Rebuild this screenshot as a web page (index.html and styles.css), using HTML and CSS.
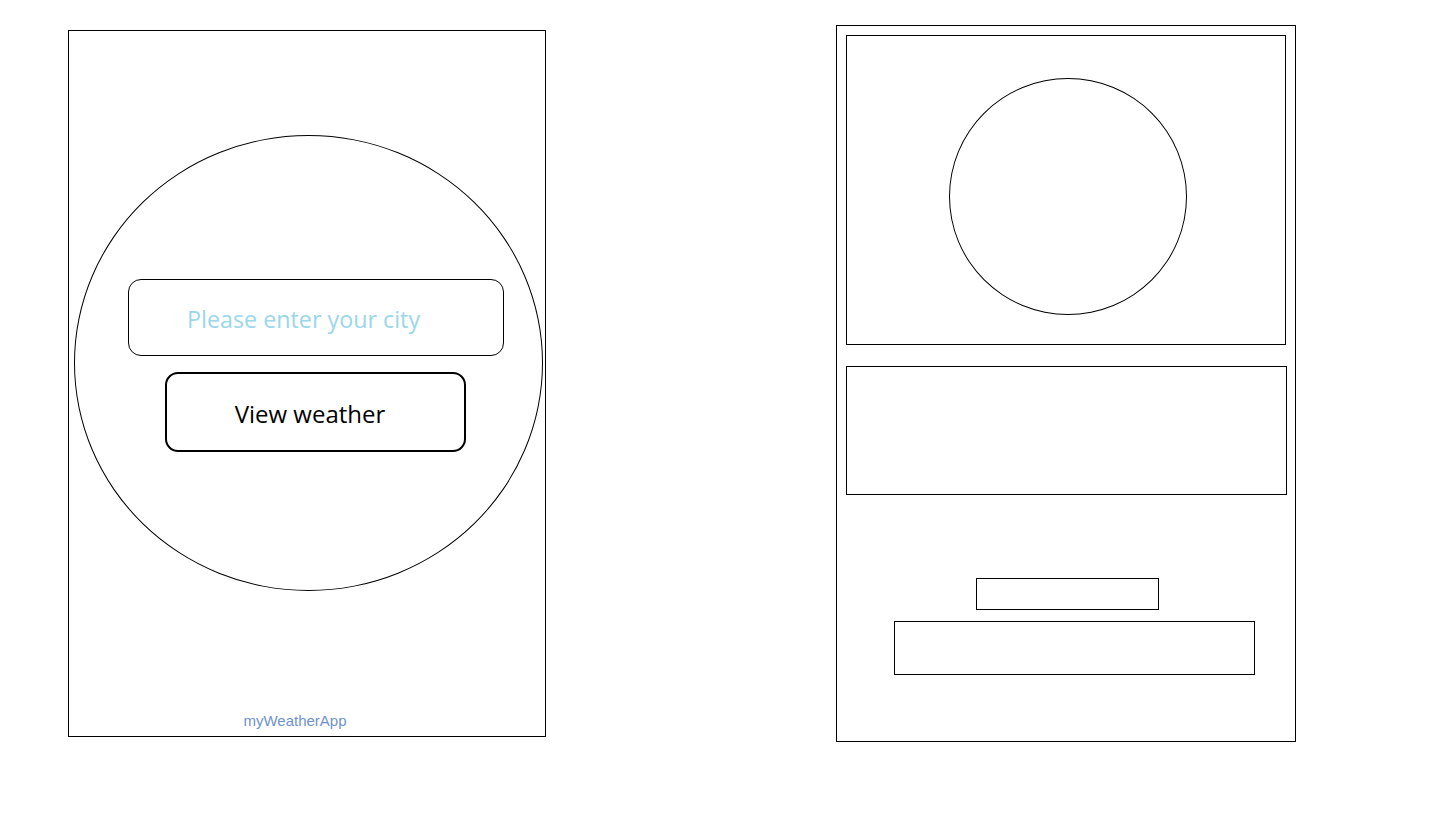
FILE: index.html
```html
<!DOCTYPE html>
<html lang="en">
<head>
<meta charset="utf-8">
<title>myWeatherApp</title>
<link rel="stylesheet" href="styles.css">
</head>
<body>
<div class="page">
  <section class="phone phone-search">
    <div class="search-circle">
      <input class="city-input" type="text" placeholder="Please enter your city">
      <button class="view-btn" type="button">View weather</button>
    </div>
    <footer class="app-name">myWeatherApp</footer>
  </section>

  <section class="phone phone-result">
    <div class="hero-box">
      <div class="icon-circle"></div>
    </div>
    <div class="info-box"></div>
    <div class="small-box"></div>
    <div class="wide-box"></div>
  </section>
</div>
</body>
</html>
```

FILE: styles.css
```css
* { box-sizing: border-box; }
html, body { margin: 0; padding: 0; background: #fff; }
body { font-family: "Open Sans", "Liberation Sans", sans-serif; color: #000; }

.page {
  display: flex;
  align-items: flex-start;
  width: 1442px;
  height: 816px;
}

.phone { border: 1px solid #000; display: flex; flex-direction: column; align-items: flex-start; }

.phone-search {
  margin-left: 68px;
  margin-top: 30px;
  width: 478px;
  height: 707px;
}

.search-circle {
  margin-top: 104px;
  margin-left: 5px;
  width: 469px;
  height: 456px;
  border: 1px solid #000;
  border-radius: 50%;
  display: flex;
  flex-direction: column;
  align-items: center;
  padding-top: 143px;
  padding-left: 15px;
}

.city-input {
  width: 376px;
  height: 77px;
  border: 1px solid #000;
  border-radius: 13px;
  padding: 2px 0 0 58px;
  font-family: "Open Sans", sans-serif;
  font-size: 23.3px;
  color: #000;
  background: #fff;
  outline: none;
}
.city-input::placeholder { color: #9ad7ea; opacity: 1; }

.view-btn {
  margin-top: 16px;
  margin-left: -2px;
  width: 301px;
  height: 80px;
  border: 2px solid #000;
  border-radius: 13px;
  background: #fff;
  font-family: "Open Sans", sans-serif;
  font-size: 24px;
  color: #000;
  padding: 2px 10px 0 0;
}

.app-name {
  margin-top: auto;
  align-self: stretch;
  text-align: center;
  padding: 0 24px 7px 0;
  font-family: "Liberation Sans", Arial, sans-serif;
  font-size: 15px;
  line-height: 17px;
  color: #6f92d0;
}

.phone-result {
  margin-left: 290px;
  margin-top: 25px;
  width: 460px;
  height: 717px;
  padding: 9px 0 0 9px;
}

.hero-box {
  width: 440px;
  height: 310px;
  border: 1px solid #000;
  padding: 42px 0 0 102px;
}
.icon-circle {
  width: 238px;
  height: 237px;
  border: 1px solid #000;
  border-radius: 50%;
}

.info-box {
  margin-top: 21px;
  width: 441px;
  height: 129px;
  border: 1px solid #000;
}

.small-box {
  margin-top: 83px;
  margin-left: 130px;
  width: 183px;
  height: 32px;
  border: 1px solid #000;
}

.wide-box {
  margin-top: 11px;
  margin-left: 48px;
  width: 361px;
  height: 54px;
  border: 1px solid #000;
}
```
